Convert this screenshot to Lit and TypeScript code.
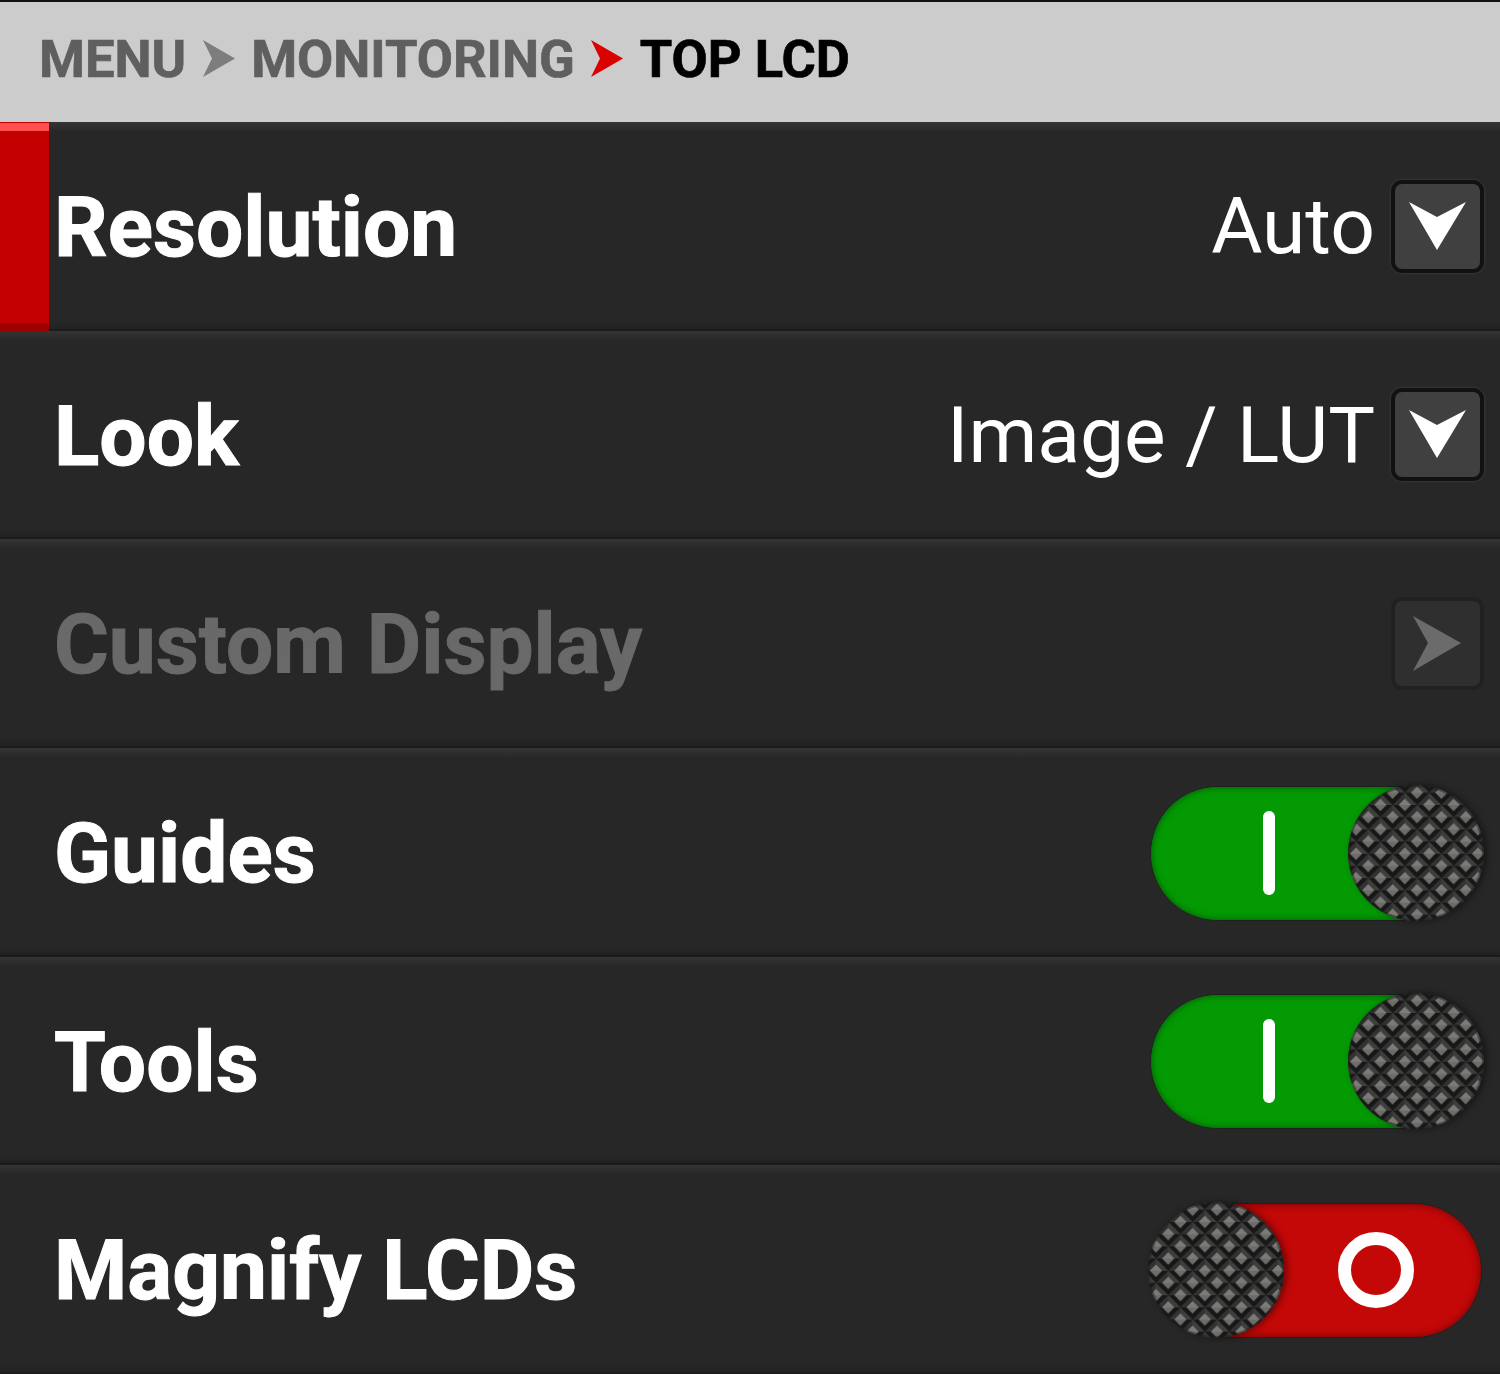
import { LitElement, html, css, svg } from "lit";
import { customElement } from "lit/decorators.js";

let knobId = 0;

@customElement("tex-knob")
class TexKnob extends LitElement {
  static styles = css`
    :host { display: block; width: 136px; height: 136px; border-radius: 50%; box-shadow: 3px 0 7px rgba(0,0,0,.45); }
    svg { display: block; }
  `;
  private id2 = `k${knobId++}`;
  render() {
    const id = this.id2;
    return html`<svg width="136" height="136" viewBox="0 0 136 136">
      <defs>
        <pattern id=${id} x="8" y="20" width="24.400" height="24.400" patternUnits="userSpaceOnUse">
          <rect width="24.400" height="24.400" fill="#262626"/>
          ${[[0, 0], [24.4, 0], [0, 24.4], [24.4, 24.4], [12.2, 12.2]].map(([x, y]) => svg`
            <g transform="translate(${x} ${y})">
              <path d="M-12.200 0 L0 -12.200 L12.200 0 L6 0 L0 -6 L-6 0Z" fill="#323232"/>
              <path d="M0 -12.200 L12.200 0 L6 0 L0 -6Z" fill="#3e3e3d"/>
              <path d="M-12.200 0 L0 12.200 L12.200 0 L6 0 L0 6 L-6 0Z" fill="#171717"/>
              <path d="M0 -6 L6 0 L0 6 L-6 0Z" fill="#6e6c69"/>
              <path d="M0 -6 L6 0 L-6 0Z" fill="#7d7b78"/>
            </g>`)}
        </pattern>
      </defs>
      <circle cx="68" cy="68" r="68" fill="url(#${id})"/>
      <circle cx="68" cy="68" r="67" fill="none" stroke="#1e1e1e" stroke-opacity=".5" stroke-width="2"/>
    </svg>`;
  }
}

@customElement("app-root")
class AppRoot extends LitElement {
  static styles = css`
    :host { display: flex; flex-direction: column; width: 1500px; height: 1374px; background: #272727; font-family: Roboto, "Liberation Sans", sans-serif; overflow: hidden; }
    .crumbs { flex: none; border-top: 2px solid #111; background: #cccccc; display: flex; align-items: center; padding: 0 0 6px 39px; box-sizing: content-box; height: 114px; font-size: 52.500px; font-weight: 700; color: #5f5f5f; -webkit-text-stroke: .7px currentColor; }
    .crumbs span { line-height: 1; }
    .crumbs .cur { color: #000; }
    .crumbs svg { display: block; margin: 0 16.500px; flex: none; }
    .list { flex: 1; display: grid; grid-template-rows: repeat(6, 1fr); }
    .row { position: relative; display: flex; align-items: center; justify-content: space-between; padding: 0 16px 0 54px; min-height: 0;
      background:
        linear-gradient(#1b1b1b, #1b1b1b) bottom / 100% 2px no-repeat,
        linear-gradient(#272727, #212121) bottom 2px left / 100% 8px no-repeat,
        linear-gradient(#343434, #272727) top / 100% 10px no-repeat,
        #272727; }
    .row.sel::before { content: ""; position: absolute; left: 0; top: 0; bottom: 0; width: 49px;
      background:
        linear-gradient(#ff5050, #ff5050) top 1px left / 100% 8px no-repeat,
        linear-gradient(#9c0000, #9c0000) bottom / 100% 8px no-repeat,
        #c40000; }
    .label { font-size: 83.800px; font-weight: 700; color: #fff; line-height: 1; padding-top: 3px; -webkit-text-stroke: 1px currentColor; }
    .label.off { color: #696969; }
    .right { display: flex; align-items: center; gap: 16px; }
    .value { font-size: 78.500px; font-weight: 400; color: #fff; line-height: 1; }
    .btn { flex: none; width: 93px; height: 93px; box-sizing: border-box; border: 4px solid #111; border-radius: 11px; background: #404040; box-shadow: 0 0 3px rgba(255,255,255,.14); display: flex; }
    .btn.off { border-color: #212121; background: #2f2f2f; box-shadow: none; }
    .btn svg { display: block; margin: -4px; flex: none; }
    .toggle { position: relative; width: 336px; height: 136px; margin-top: 1px; }
    .track { position: absolute; left: 2px; right: 2px; top: 1px; bottom: 0; border-radius: 68px; border: 1px solid #1f1f1f; box-sizing: border-box; }
    .toggle.on .track { background: #049a04; box-shadow: inset 0 0 7px #035503; }
    .toggle.no .track { background: #c40808; box-shadow: inset 0 0 8px #6c0505; }
    tex-knob { position: absolute; top: 0; }
    .toggle.on tex-knob { right: 0; }
    .toggle.no tex-knob { left: 0; }
    .bar { position: absolute; left: 115px; top: 26px; width: 12px; height: 84px; border-radius: 6px; background: #fff; }
    .ring { position: absolute; left: 190px; top: 30px; width: 76px; height: 76px; box-sizing: border-box; border: 13px solid #fff; border-radius: 50%; }
  `;

  private crumbArrow(color: string) {
    return html`<svg width="32" height="38" viewBox="0 0 32 38"><path d="M0 0 L9 18.500 L0 37 L32 18.500Z" fill=${color}/></svg>`;
  }
  private drop() {
    return html`<div class="btn"><svg width="93" height="93" viewBox="0 0 93 93"><path d="M18 22 L46 37 L75 22 L46 70Z" fill="#fff"/></svg></div>`;
  }
  private toggle(on: boolean) {
    return html`<div class="toggle ${on ? "on" : "no"}">
      <div class="track"></div>
      ${on ? html`<div class="bar"></div>` : html`<div class="ring"></div>`}
      <tex-knob></tex-knob>
    </div>`;
  }

  render() {
    return html`
      <div class="crumbs">
        <span>MENU</span>${this.crumbArrow("#7d7d7d")}<span>MONITORING</span>${this.crumbArrow("#dd0000")}<span class="cur">TOP LCD</span>
      </div>
      <div class="list">
        <div class="row sel"><div class="label">Resolution</div><div class="right"><div class="value">Auto</div>${this.drop()}</div></div>
        <div class="row"><div class="label">Look</div><div class="right"><div class="value">Image / LUT</div>${this.drop()}</div></div>
        <div class="row"><div class="label off">Custom Display</div><div class="right"><div class="btn off"><svg width="93" height="93" viewBox="0 0 93 93"><path d="M22 19 L37 46 L22 74 L70 46Z" fill="#6b6b6b"/></svg></div></div></div>
        <div class="row"><div class="label">Guides</div>${this.toggle(true)}</div>
        <div class="row"><div class="label">Tools</div>${this.toggle(true)}</div>
        <div class="row"><div class="label">Magnify LCDs</div>${this.toggle(false)}</div>
      </div>
    `;
  }
}
